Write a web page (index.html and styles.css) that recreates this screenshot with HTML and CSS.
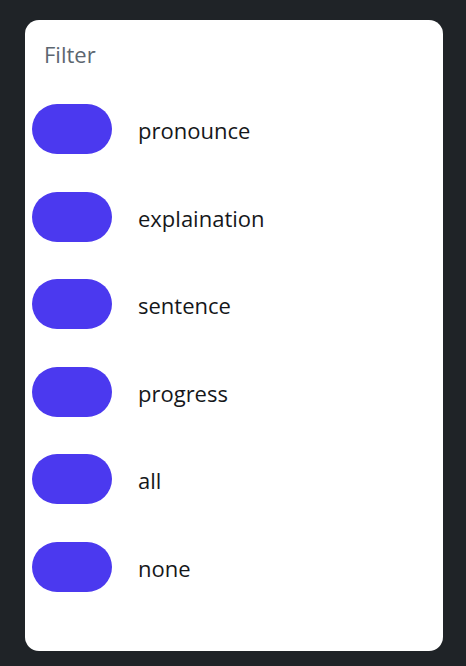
FILE: index.html
```html
<!DOCTYPE html>
<html>
<head>
<meta charset="utf-8">
<link rel="stylesheet" href="styles.css">
</head>
<body>
<div class="card">
  <div class="title">Filter</div>
  <ul class="list">
    <li class="row"><span class="pill"></span><span class="label">pronounce</span></li>
    <li class="row"><span class="pill"></span><span class="label">explaination</span></li>
    <li class="row"><span class="pill"></span><span class="label">sentence</span></li>
    <li class="row"><span class="pill"></span><span class="label">progress</span></li>
    <li class="row"><span class="pill"></span><span class="label">all</span></li>
    <li class="row"><span class="pill"></span><span class="label">none</span></li>
  </ul>
</div>
</body>
</html>
```
FILE: styles.css
```css
html, body {
  margin: 0;
  padding: 0;
  background: #1f2327;
  height: 100%;
}
body {
  padding: 20px 23px 0 25px;
  box-sizing: border-box;
  font-family: "Open Sans", Inter, sans-serif;
}
.card {
  background: #ffffff;
  border-radius: 14px;
  height: 631px;
  box-sizing: border-box;
  padding: 21px 0 0 0;
}
.title {
  margin-left: 19px;
  font-size: 22px;
  line-height: 26px;
  color: #5c6670;
}
.list {
  list-style: none;
  margin: 37px 0 0 0;
  padding: 0;
  display: flex;
  flex-direction: column;
  gap: 37.5px;
}
.row {
  display: flex;
  align-items: center;
  padding-left: 7px;
  height: 50px;
}
.pill {
  width: 80px;
  height: 50px;
  border-radius: 25px;
  background: #4b39ef;
  flex: none;
}
.label {
  margin-left: 26px;
  font-size: 22px;
  line-height: 26px;
  padding-top: 2px;
  color: #15171a;
}
```
